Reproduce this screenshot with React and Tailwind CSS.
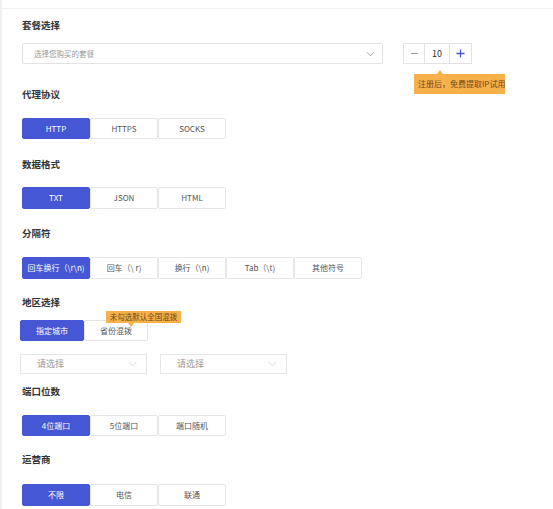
import React, { useState } from 'react';

const FONT = { fontFamily: '"Noto Sans CJK SC", "Noto Sans", sans-serif' };

const Chevron = ({ className = '' }) => (
  <svg viewBox="0 0 16 10" className={className} fill="none" stroke="currentColor" strokeWidth="1.2">
    <path d="M1.5 1.5 L8 8 L14.5 1.5" />
  </svg>
);

const Label = ({ children, className = '' }) => (
  <div className={`h-4 leading-4 text-[9.5px] font-bold text-[#333] ${className}`}>{children}</div>
);

// segmented option group, first item selected by default
const Options = ({ items, className = '', h = 'h-[21px]', w = 'w-[68px]' }) => {
  const [active, setActive] = useState(0);
  return (
    <div className={`flex ${className}`}>
      {items.map((item, i) => (
        <button
          key={item}
          onClick={() => setActive(i)}
          className={`${w} ${h} flex items-center justify-center rounded-[2px] text-[8px] border ${
            active === i
              ? 'bg-[#4557d4] border-[#4557d4] text-white'
              : 'bg-white border-[#e6e6e6] text-[#555]'
          }`}
        >
          {item}
        </button>
      ))}
    </div>
  );
};

const Tip = ({ children, className = '', arrow = 'up', arrowClass = '' }) => (
  <div className={`absolute bg-[#f6b14a] text-[#6a4a1d] whitespace-nowrap ${className}`}>
    {arrow === 'up' ? (
      <span className={`absolute -top-[4px] w-0 h-0 border-l-[3px] border-r-[3px] border-b-[4px] border-l-transparent border-r-transparent border-b-[#f6b14a] ${arrowClass}`} />
    ) : (
      <span className={`absolute -bottom-[4px] w-0 h-0 border-l-[3px] border-r-[3px] border-t-[4px] border-l-transparent border-r-transparent border-t-[#f6b14a] ${arrowClass}`} />
    )}
    {children}
  </div>
);

export default function App() {
  const [count, setCount] = useState(10);

  return (
    <div className="w-[553px] h-[509px] bg-white overflow-hidden relative border-l-2 border-[#f0f0f0]" style={FONT}>
      <div className="absolute left-[-2px] top-0 w-[2px] h-[9px] bg-[#3b2bb0]" />
      <div className="h-[9px] border-b border-[#f0f0f0]" />

      <div className="pl-[18px]">
        <Label className="ml-[2px] mt-[8px]">套餐选择</Label>
        <div className="ml-[2px] mt-[10px] flex items-center">
          <div className="w-[361px] h-[21px] border border-[#e3e3e3] rounded-[2px] flex items-center justify-between pl-[11px] pr-[7px]">
            <span className="text-[7.5px] text-[#999]">选择您购买的套餐</span>
            <Chevron className="w-[9px] h-[6px] text-[#888]" />
          </div>
          <div className="relative ml-[20px] flex h-[21px] border border-[#e3e3e3]">
            <button
              onClick={() => setCount(c => Math.max(1, c - 1))}
              className="w-[21px] flex items-center justify-center text-[#999] border-r border-[#e3e3e3]"
            >
              <span className="block w-[7px] h-[1.5px] bg-[#999]" />
            </button>
            <div className="w-[25px] flex items-center justify-center text-[9px] text-[#333] border-r border-[#e3e3e3]">
              {count}
            </div>
            <button
              onClick={() => setCount(c => c + 1)}
              className="w-[21px] flex items-center justify-center text-[#4557d4]"
            >
              <svg viewBox="0 0 10 10" className="w-[9px] h-[9px]" stroke="currentColor" strokeWidth="1.4">
                <path d="M5 0.5 V9.5 M0.5 5 H9.5" />
              </svg>
            </button>
            <Tip className="left-[10px] top-[30px] w-[91px] h-[20px] flex items-center pl-[4px] text-[8px]" arrowClass="left-[23px]">
              注册后，免费提取IP试用
            </Tip>
          </div>
        </div>

        <Label className="ml-[2px] mt-[22px]">代理协议</Label>
        <Options className="ml-[2px] mt-[16px]" items={['HTTP', 'HTTPS', 'SOCKS']} />

        <Label className="ml-[2px] mt-[17px]">数据格式</Label>
        <Options className="ml-[2px] mt-[15px]" h="h-[22px]" items={['TXT', 'JSON', 'HTML']} />

        <Label className="ml-[2px] mt-[16px]">分隔符</Label>
        <Options
          className="ml-[2px] mt-[16px]"
          h="h-[22px]"
          items={['回车换行（\\r\\n)', '回车（\\ r)', '换行（\\n)', 'Tab（\\t)', '其他符号']}
        />

        <Label className="ml-[2px] mt-[15px]">地区选择</Label>
        <div className="relative mt-[10px]">
          <Options w="w-[64px]" items={['指定城市', '省份混拨']} />
          <Tip className="left-[86px] -top-[9px] h-[12px] w-[75px] flex items-center justify-center text-[7.5px]" arrow="down" arrowClass="left-[22px]">
            未勾选默认全国混拨
          </Tip>
        </div>
        <div className="mt-[13px] flex gap-[13px]">
          {[0, 1].map(i => (
            <div key={i} className="w-[127px] h-[20px] border border-[#e6e6e6] flex items-center justify-between pl-[16px] pr-[8px]">
              <span className="text-[9px] text-[#999]">请选择</span>
              <Chevron className="w-[11px] h-[6px] text-[#ccc]" />
            </div>
          ))}
        </div>

        <Label className="ml-[2px] mt-[9px]">端口位数</Label>
        <Options className="ml-[2px] mt-[16px]" items={['4位端口', '5位端口', '端口随机']} />

        <Label className="ml-[2px] mt-[15px]">运营商</Label>
        <Options className="ml-[2px] mt-[17px]" h="h-[22px]" items={['不限', '电信', '联通']} />
      </div>
    </div>
  );
}
